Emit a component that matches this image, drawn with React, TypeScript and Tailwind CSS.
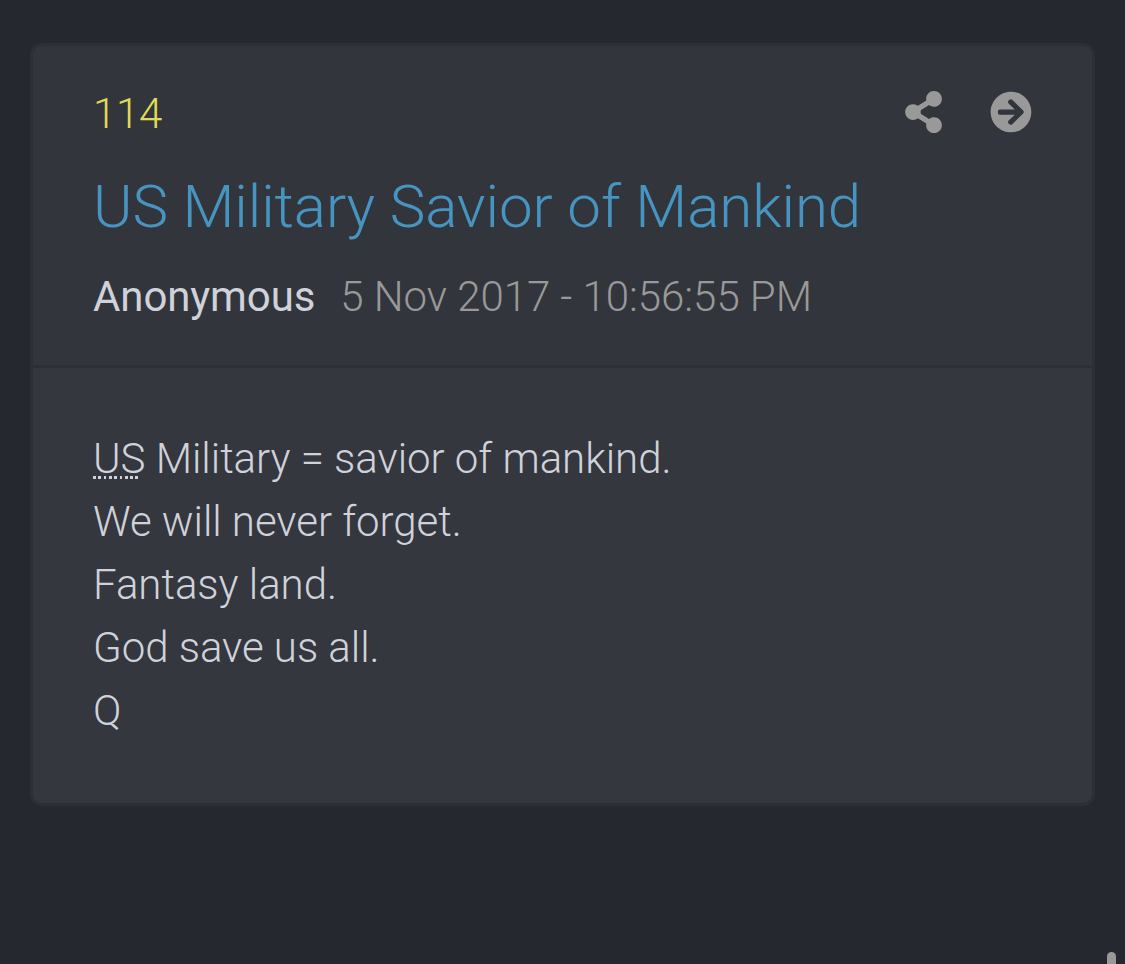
import { FaArrowCircleRight, FaShareAlt } from "react-icons/fa";

const lines = ["We will never forget.", "Fantasy land.", "God save us all.", "Q"];

export default function App() {
  return (
    <div className="relative h-[964px] w-[1125px] overflow-hidden bg-[#25282f] px-[30px] pt-[43px] font-['Roboto',sans-serif] font-light">
      <article className="h-[763px] overflow-hidden rounded-xl border-[3px] border-[#2d2f37] bg-[#34373e]">
        <header className="h-[322px] border-b-[3px] border-[#2e2e36] bg-[#32353c] px-[60px] pt-[35px]">
          <div className="flex h-[62px] items-center justify-between">
            <span className="pt-1 text-[42px] leading-[62px] tracking-[-0.3px] text-[#e0db57]">114</span>
            <div className="flex items-center gap-12 text-[#999]">
              <FaShareAlt className="h-[42px] w-[37px]" />
              <FaArrowCircleRight className="size-[42px]" />
            </div>
          </div>
          <h1 className="mt-[19px] whitespace-nowrap text-[60px] leading-[90px] tracking-[-0.06px] text-[#4695c0]">
            US Military Savior of Mankind
          </h1>
          <div className="mt-[13px] flex whitespace-nowrap text-[42px] leading-[63px]">
            <span className="font-normal tracking-[-0.1px] text-[#cfd2da]">Anonymous</span>
            <time className="ml-[25px] tracking-[-0.04px] text-[#999]">5 Nov 2017 - 10:56:55 PM</time>
          </div>
        </header>
        <div className="px-[60px] pt-[59px] text-[42px] leading-[63px] tracking-[-0.04px] text-[#cfd2da]">
          <p>
            <abbr className="bg-[repeating-linear-gradient(90deg,currentColor_0_2.7px,transparent_2.7px_5.3px)] bg-[length:46px_3px] bg-[position:0_42px] bg-no-repeat">
              US
            </abbr>{" "}
            Military = savior of mankind.
          </p>
          {lines.map((line) => (
            <p key={line}>{line}</p>
          ))}
        </div>
      </article>
      {/* scrollbar thumb */}
      <div className="absolute right-[9px] top-[952px] h-10 w-[9px] rounded-full bg-[#999]" />
    </div>
  );
}
